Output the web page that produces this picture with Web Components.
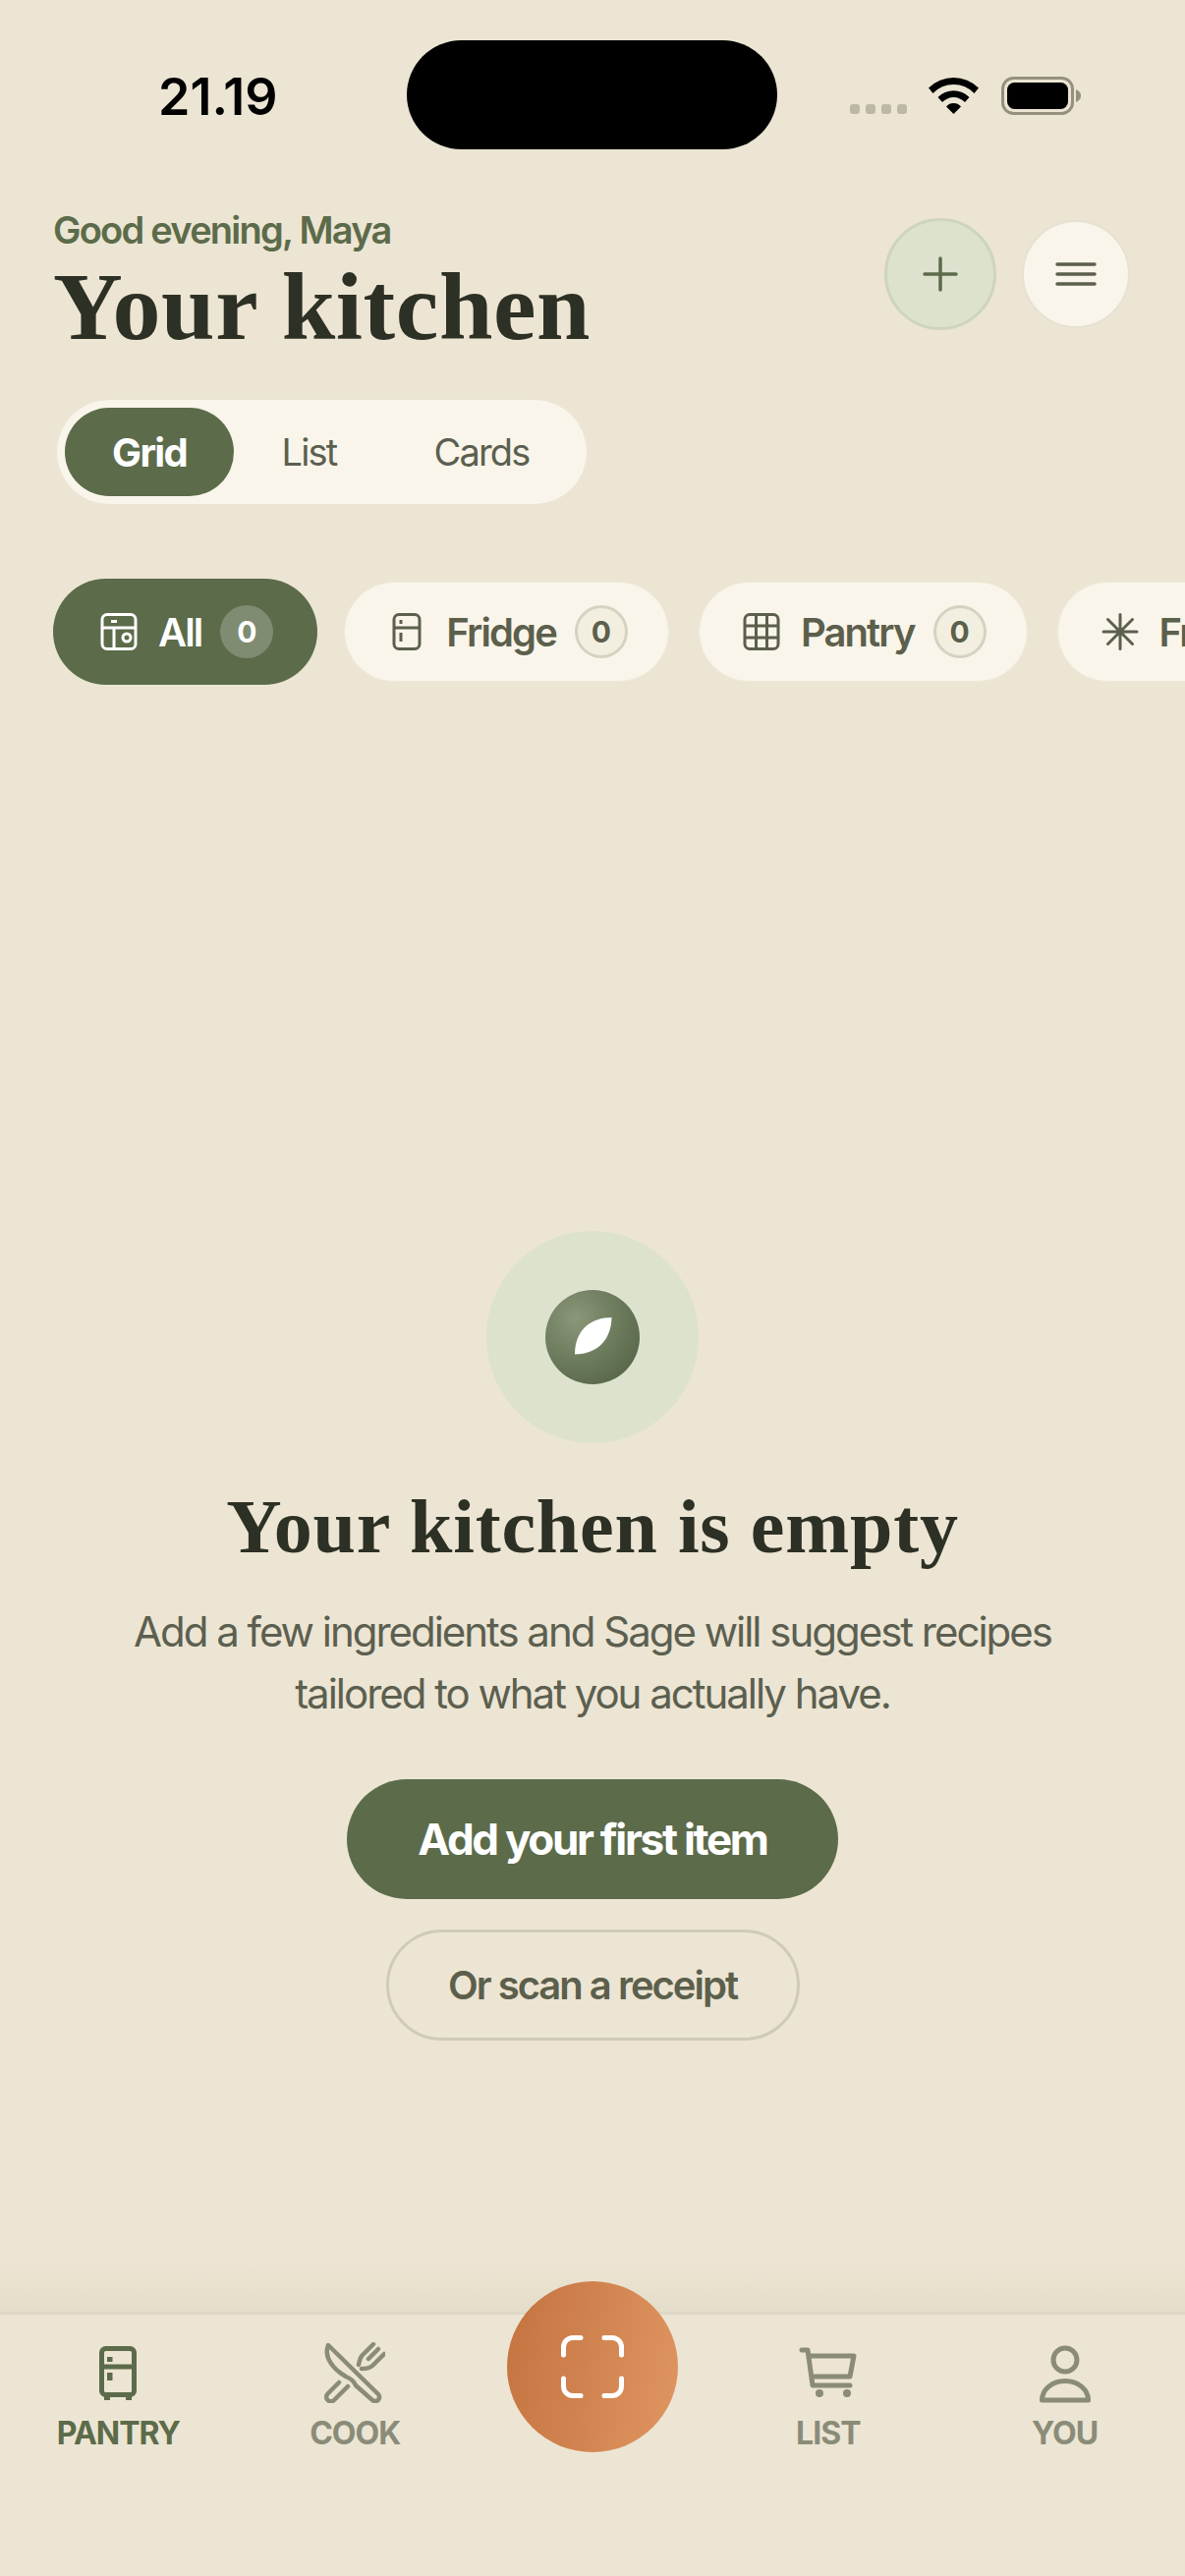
<!DOCTYPE html>
<html>
<head>
<meta charset="utf-8">
<style>
  html, body { margin: 0; padding: 0; background: #ece5d3; }
  body { font-family: Inter, "Liberation Sans", sans-serif; }
</style>
</head>
<body>
<kitchen-app></kitchen-app>

<template id="status-tpl">
  <style>
    :host { display: grid; grid-template-columns: 414px 377px 1fr; height: 111px; padding-top: 41px; }
    .time { font-size: 52px; font-weight: 600; color: #000; padding-left: 161px; display: flex; align-items: center; height: 114px; }
    .island { background: #000; border-radius: 56px; height: 111px; }
    .icons { display: flex; align-items: flex-start; padding: 37px 0 0 74px; }
    .dots { display: flex; gap: 6px; margin-top: 28px; }
    .dots i { width: 10px; height: 10px; background: #bdb7a7; border-radius: 3px; }
    svg { display: block; }
    .wifi { margin-left: 22px; }
    .bat { margin-left: 23px; }
  </style>
  <div class="time">21.19</div>
  <div class="island"></div>
  <div class="icons">
    <div class="dots"><i></i><i></i><i></i><i></i></div>
    <svg class="wifi" width="51" height="38" viewBox="0 0 51 38"><path d="M0 11.5 A36 36 0 0 1 51 11.5 L46.500 17 A29 29 0 0 0 4.500 17Z M9.500 21 A22.500 22.500 0 0 1 41.500 21 L37 26 A16 16 0 0 0 14 26Z M18 30.500 A10 10 0 0 1 33 30.500 L25.500 38Z" fill="#000"/></svg>
    <svg class="bat" width="82" height="40" viewBox="0 0 82 40"><rect x="1.500" y="1.500" width="71" height="36" rx="11" fill="none" stroke="#958f7f" stroke-width="3"/><rect x="6" y="6" width="62" height="27" rx="7.500" fill="#000"/><path d="M76 13 C80 15 81 17 81 19.500 C81 22 80 24 76 26Z" fill="#958f7f"/></svg>
  </div>
</template>

<template id="header-tpl">
  <style>
    :host { display: flex; justify-content: space-between; padding: 57px 56px 0 54px; height: 197px; }
    .greet { font-size: 38px; font-weight: 600; color: #5c6b4a; letter-spacing: -1.75px; line-height: 46px; margin-top: 2px; }
    h1 { margin: 3px 0 0; font-family: "Liberation Serif", serif; font-weight: 700; font-size: 98px; line-height: 104px; color: #2d3024; letter-spacing: 0.6px; }
    .actions { display: flex; gap: 26px; align-items: center; height: 114px; margin-top: 13px; }
    .btn { box-sizing: border-box; border-radius: 50%; display: flex; align-items: center; justify-content: center; }
    .add { width: 114px; height: 114px; background: #dde2cf; border: 3px solid #ced4bf; }
    .menu { width: 110px; height: 110px; background: #f9f5ea; border: 2px solid #e6e1d3; }
    svg { display: block; }
  </style>
  <div>
    <div class="greet">Good evening, Maya</div>
    <h1>Your kitchen</h1>
  </div>
  <div class="actions">
    <div class="btn add"><svg width="36" height="36" viewBox="0 0 36 36" fill="none" stroke="#5c6b4a" stroke-width="3.500" stroke-linecap="round"><path d="M18 2V34M2 18H34"/></svg></div>
    <div class="btn menu"><svg width="42" height="24" viewBox="0 0 42 24" fill="none" stroke="#5c5f4c" stroke-width="3.500" stroke-linecap="round"><path d="M2 2H40M2 12H40M2 22H40"/></svg></div>
  </div>
</template>

<template id="segment-tpl">
  <style>
    :host { display: inline-flex; box-sizing: border-box; height: 108px; width: 541px; margin: 0 0 0 57px; padding: 8px; background: #f9f5ea; border-radius: 54px; border: 1px solid #eae5d7; font-size: 38px; color: #5c5f50; align-self: flex-start; letter-spacing: -1.8px; }
    div { display: flex; align-items: center; justify-content: center; border-radius: 45px; }
    .on { width: 172px; background: #5c6b4a; color: #fff; font-size: 40px; font-weight: 700; letter-spacing: -1.7px; }
    .b { width: 153px; }
    .c { width: 198px; }
  </style>
  <div class="on">Grid</div><div class="b">List</div><div class="c">Cards</div>
</template>

<template id="chip-tpl">
  <style>
    :host { display: flex; flex: none; align-items: center; box-sizing: border-box; height: 102px; padding: 0 41px; background: #f9f5ea; border: 1px solid #eee9db; border-radius: 51px; color: #5c5f4c; font-size: 40px; font-weight: 600; letter-spacing: -1.9px; gap: 18px; }
    :host([active]) { height: 108px; padding: 0 45px; margin-right: -3px; background: #5c6b4a; border: 0; border-radius: 54px; color: #fff; }
    .badge { box-sizing: border-box; width: 54px; height: 54px; border-radius: 50%; border: 3px solid #d5d3c0; background: #f3efe0; font-size: 30px; font-weight: 700; display: flex; align-items: center; justify-content: center; letter-spacing: 0; margin-left: 1px; }
    :host([active]) .badge { background: #808c72; border: 0; }
    ::slotted(svg) { display: block; }
  </style>
  <slot name="icon"></slot><span><slot></slot></span><span class="badge">0</span>
</template>

<template id="empty-tpl">
  <style>
    :host { display: block; text-align: center; }
    .halo { width: 216px; height: 216px; margin: 0 auto; border-radius: 50%; background: #dde2cf; display: flex; align-items: center; justify-content: center; }
    .core { width: 96px; height: 96px; border-radius: 50%; background: radial-gradient(circle at 32% 30%, #8a9778 0%, #6d7c5d 45%, #4e5d40 100%); display: flex; align-items: center; justify-content: center; }
    h2 { margin: 0; font-family: "Liberation Serif", serif; font-weight: 700; font-size: 78px; line-height: 90px; color: #2d3024; padding-top: 40px; letter-spacing: 0.8px; }
    p { margin: 0; font-size: 42px; line-height: 63px; color: #5c5f50; letter-spacing: -2.02px; padding-top: 30px; }
    .actions { display: flex; flex-direction: column; align-items: center; gap: 31px; padding-top: 56px; }
    .primary { box-sizing: border-box; width: 500px; height: 122px; border-radius: 61px; background: #5c6b4a; color: #fff; font-size: 44px; font-weight: 700; letter-spacing: -2.3px; display: flex; align-items: center; justify-content: center; }
    .ghost { box-sizing: border-box; width: 421px; height: 113px; border-radius: 57px; border: 3px solid #cfcabb; color: #5c5f4c; font-size: 40px; font-weight: 600; letter-spacing: -2px; display: flex; align-items: center; justify-content: center; }
    svg { display: block; transform: translate(1px, -1px); }
  </style>
  <div class="halo"><div class="core"><svg width="38" height="38" viewBox="0 0 38 38"><path d="M37.500 0 C37 22 24 37 0 37.500 C0 13 16 0 37.500 0Z" fill="#fff"/></svg></div></div>
  <h2>Your kitchen is empty</h2>
  <p>Add a few ingredients and Sage will suggest recipes<br>tailored to what you actually have.</p>
  <div class="actions">
    <div class="primary">Add your first item</div>
    <div class="ghost">Or scan a receipt</div>
  </div>
</template>

<template id="navitem-tpl">
  <style>
    :host { display: flex; flex-direction: column; align-items: center; color: #8a8c78; font-size: 32px; font-weight: 700; line-height: 40px; letter-spacing: -1px; }
    :host([active]) { color: #5c6b4a; }
    .ic { height: 64px; margin-bottom: 11px; display: flex; align-items: flex-end; }
    ::slotted(svg) { display: block; }
  </style>
  <div class="ic"><slot name="icon"></slot></div>
  <slot></slot>
</template>

<template id="nav-tpl">
  <style>
    :host { display: block; position: relative; height: 269px; box-sizing: border-box; border-top: 3px solid #dfd8c6; background: #ece5d3; padding-top: 26px; }
    :host::before { content: ""; position: absolute; left: 0; right: 0; top: -53px; height: 50px; background: linear-gradient(to bottom, rgba(221,214,194,0), rgba(221,214,194,.55)); pointer-events: none; }
    .row { display: grid; grid-template-columns: repeat(5, 1fr); margin-right: 2px; }
    .fab { position: absolute; left: 516px; top: -34px; width: 174px; height: 174px; border-radius: 50%; background: linear-gradient(100deg, #c4733f, #e09662); display: flex; align-items: center; justify-content: center; }
    svg { display: block; }
  </style>
  <div class="row"><slot></slot></div>
  <div class="fab"><svg width="68" height="68" viewBox="0 0 68 68" fill="none" stroke="#fff" stroke-width="5" stroke-linecap="round"><path d="M22 4.500H14a9.500 9.500 0 0 0 -9.500 9.500V22M46 4.500H54a9.500 9.500 0 0 1 9.500 9.500V22M4.500 46V54a9.500 9.500 0 0 0 9.500 9.500H22M63.500 46V54a9.500 9.500 0 0 1 -9.500 9.500H46"/></svg></div>
</template>

<template id="app-tpl">
  <style>
    :host { display: flex; flex-direction: column; width: 1206px; height: 2622px; overflow: hidden; background: #ece5d3; }
    .chips { display: flex; gap: 30px; align-items: center; overflow: hidden; padding: 75px 0 0 54px; height: 108px; flex: none; }
    main { flex: 1; min-height: 0; display: flex; flex-direction: column; justify-content: flex-start; padding-top: 556px; box-sizing: border-box; }
  </style>
  <status-bar></status-bar>
  <kitchen-header></kitchen-header>
  <view-switch></view-switch>
  <div class="chips">
    <filter-chip active>
      <svg slot="icon" width="44" height="38" viewBox="-3 0 44 38" fill="none" stroke="#fff" stroke-width="3"><rect x="2" y="1.500" width="34" height="35" rx="5"/><path d="M2 15H36M14 15V36.500M11 8.500H17"/><circle cx="27" cy="25" r="4"/></svg>
      All
    </filter-chip>
    <filter-chip>
      <svg slot="icon" width="44" height="38" viewBox="-7 0 44 38" fill="none" stroke="#5c5f4c" stroke-width="3"><rect x="2" y="1.500" width="26" height="35" rx="5"/><path d="M2 15H28M9 7V11M9 20V29"/></svg>
      Fridge
    </filter-chip>
    <filter-chip>
      <svg slot="icon" width="44" height="38" viewBox="-3 0 44 38" fill="none" stroke="#5c5f4c" stroke-width="3"><rect x="2" y="1.500" width="34" height="35" rx="5"/><path d="M2 13H36M2 25H36M13.500 1.500V36.500M24.500 1.500V36.500"/></svg>
      Pantry
    </filter-chip>
    <filter-chip>
      <svg slot="icon" width="44" height="38" viewBox="-3 0 44 38" fill="none" stroke="#5c5f4c" stroke-width="3" stroke-linecap="round"><path d="M19 1.500V36.500M2 19H36M6.500 6.500L31.500 31.500M31.500 6.500L6.500 31.500"/></svg>
      Freezer
    </filter-chip>
  </div>
  <main><empty-state></empty-state></main>
  <bottom-nav>
    <nav-item active>
      <svg slot="icon" width="60" height="60" viewBox="0 0 60 60" fill="none" stroke="#5c6b4a" stroke-width="5"><rect x="13.500" y="4.500" width="33" height="47" rx="4"/><path d="M13.500 23H46.500"/><path d="M19 13H24.500V18H19ZM19 29H24.500V37H19ZM16 53H22V57H16ZM38 53H44V57H38Z" fill="#5c6b4a" stroke="none"/></svg>
      PANTRY
    </nav-item>
    <nav-item>
      <svg slot="icon" width="62" height="62" viewBox="0 0 62 62" fill="none" stroke="#8a8c78" stroke-width="4.500" stroke-linecap="round" stroke-linejoin="round"><path d="M4 3 L55 53 C58 57 54 62 49 59 L32 44 C30 39 27 37 22 35 C10 28 -1 16 4 3Z"/><path d="M15 41L3.500 52.500a4.500 4.500 0 0 0 6.500 6.500L24 45"/><path d="M50 2L39 13C36 16 36 19 35 23M55 7L45 17M61 12L49 24C46 27 42 27 38 27"/></svg>
      COOK
    </nav-item>
    <span></span>
    <nav-item>
      <svg slot="icon" width="60" height="60" viewBox="0 0 60 60" fill="none" stroke="#8a8c78" stroke-width="5" stroke-linecap="round" stroke-linejoin="round"><path d="M3 6H9L14 42H52"/><path d="M11 12H56L52 33H16"/><circle cx="21" cy="50" r="4" fill="#8a8c78" stroke="none"/><circle cx="49" cy="50" r="4" fill="#8a8c78" stroke="none"/></svg>
      LIST
    </nav-item>
    <nav-item>
      <svg slot="icon" width="60" height="60" viewBox="0 0 60 60" fill="none" stroke="#8a8c78" stroke-width="5" stroke-linejoin="round"><circle cx="30" cy="16" r="12"/><path d="M6.500 57C6.500 46 17 37.500 30 37.500S53.500 46 53.500 57Z"/></svg>
      YOU
    </nav-item>
  </bottom-nav>
</template>

<script>
  // every element just clones its own template into an open shadow root
  function register(tag, tplId) {
    customElements.define(tag, class extends HTMLElement {
      constructor() {
        super();
        this.shadow = this.attachShadow({ mode: "open" });
        this.shadow.appendChild(document.getElementById(tplId).content.cloneNode(true));
      }
    });
  }
  register("status-bar", "status-tpl");
  register("kitchen-header", "header-tpl");
  register("view-switch", "segment-tpl");
  register("filter-chip", "chip-tpl");
  register("empty-state", "empty-tpl");
  register("nav-item", "navitem-tpl");
  register("bottom-nav", "nav-tpl");
  register("kitchen-app", "app-tpl");
</script>
</body>
</html>
